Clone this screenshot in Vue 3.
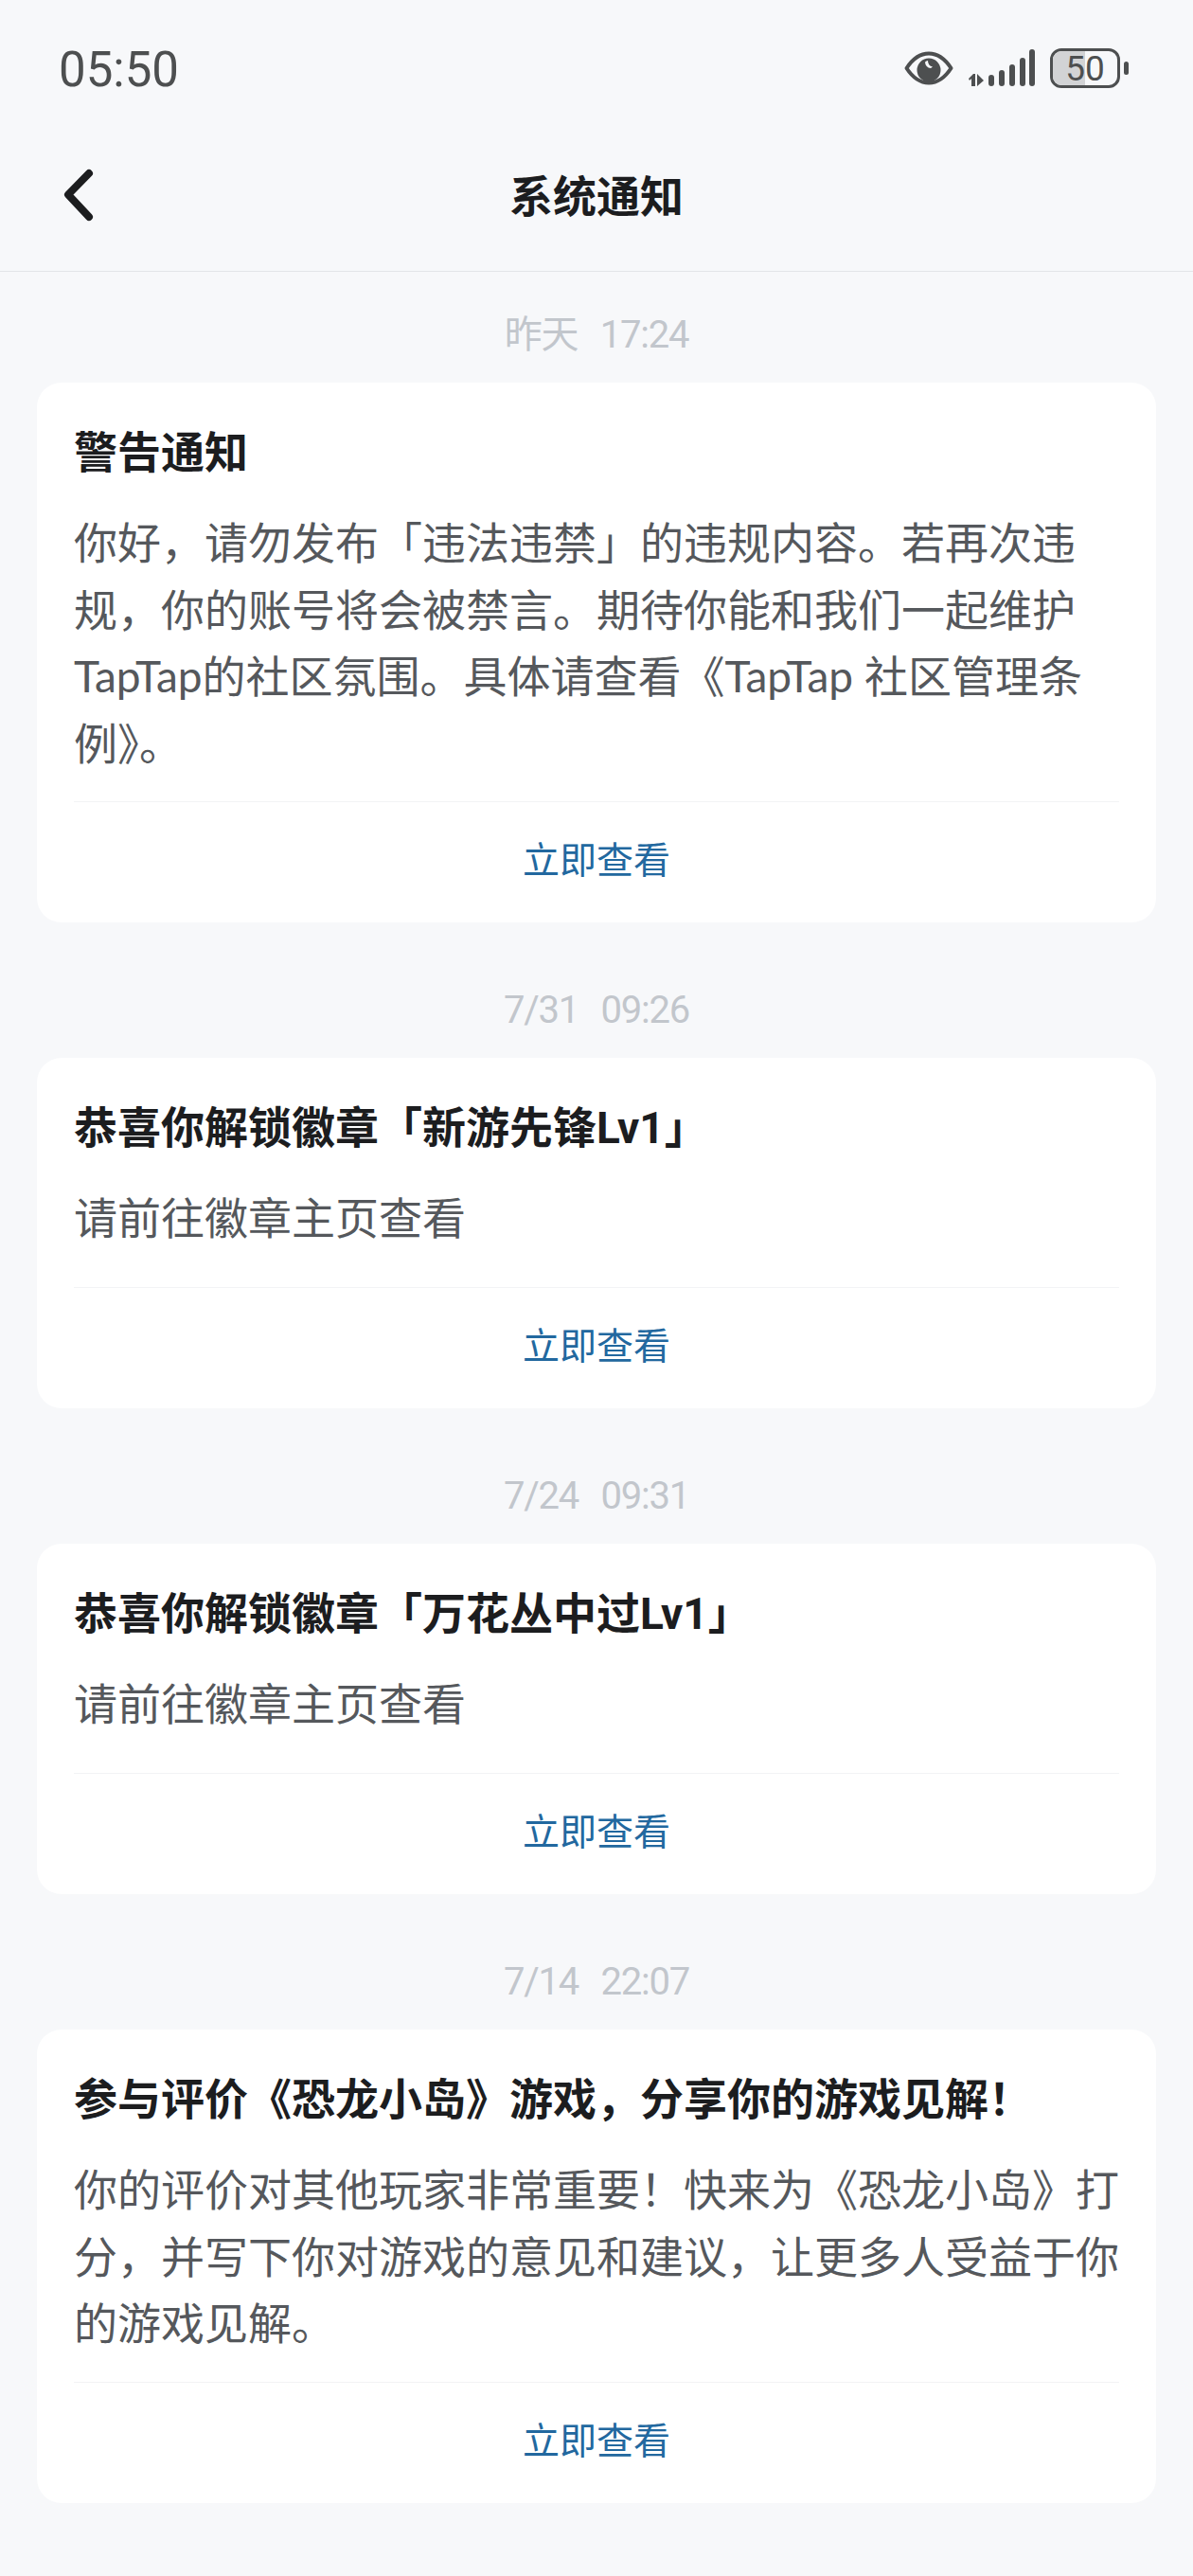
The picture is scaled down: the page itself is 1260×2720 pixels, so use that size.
<template>
  <div class="page">
    <div class="status-bar">
      <span class="clock">05:50</span>
      <div class="status-icons">
        <svg class="eye" viewBox="0 0 52 36" fill="none">
          <path d="M2.500 18C9 8 17 2.500 26 2.500S43 8 49.500 18C43 28 35 33.500 26 33.500S9 28 2.500 18z" stroke="#4d4f50" stroke-width="4" stroke-linejoin="round"/>
          <path fill-rule="evenodd" d="M26 7.500a12.500 12.500 0 1 1-12.500 12.500 12.500 12.500 0 0 1 12.500-12.500zm-1 2.500a5.500 5.500 0 0 0-3 1.500 6.500 6.500 0 0 0 6 6.500 5.500 5.500 0 0 0 2-1.500 6.500 6.500 0 0 1-5-6.500z" fill="#4d4f50"/>
        </svg>
        <svg class="signal" viewBox="0 0 70 40" fill="#4d4f50">
          <path d="M0 31l5-5h2v13H3v-8l-2 2zM9 26l7 7-7 6z"/>
          <rect x="21" y="27" width="6" height="12" rx="3"/>
          <rect x="32" y="22" width="6" height="17" rx="3"/>
          <rect x="43" y="16" width="6" height="23" rx="3"/>
          <rect x="54" y="9" width="6" height="30" rx="3"/>
          <rect x="64" y="0" width="6" height="39" rx="3"/>
        </svg>
        <div class="battery">
          <div class="battery-body">
            <div class="battery-level"></div>
            <span>50</span>
          </div>
          <div class="battery-cap"></div>
        </div>
      </div>
    </div>

    <header class="nav">
      <svg class="back" viewBox="0 0 32 56" fill="none">
        <path d="M27 5L5 27.500 27 51" stroke="#1c1d1f" stroke-width="8" stroke-linecap="round" stroke-linejoin="round"/>
      </svg>
      <h1>系统通知</h1>
    </header>

    <main class="list">
      <section v-for="item in notices" :key="item.time" class="notice">
        <div class="time">{{ item.time }}</div>
        <div class="card">
          <h2>{{ item.title }}</h2>
          <p>{{ item.body }}</p>
          <a class="action">立即查看</a>
        </div>
      </section>
    </main>
  </div>
</template>

<script setup>
const notices = [
  {
    time: '昨天  17:24',
    title: '警告通知',
    body: '你好，请勿发布「违法违禁」的违规内容。若再次违规，你的账号将会被禁言。期待你能和我们一起维护TapTap的社区氛围。具体请查看《TapTap 社区管理条例》。'
  },
  {
    time: '7/31  09:26',
    title: '恭喜你解锁徽章「新游先锋Lv1」',
    body: '请前往徽章主页查看'
  },
  {
    time: '7/24  09:31',
    title: '恭喜你解锁徽章「万花丛中过Lv1」',
    body: '请前往徽章主页查看'
  },
  {
    time: '7/14  22:07',
    title: '参与评价《恐龙小岛》游戏，分享你的游戏见解！',
    body: '你的评价对其他玩家非常重要！快来为《恐龙小岛》打分，并写下你对游戏的意见和建议，让更多人受益于你的游戏见解。'
  }
]
</script>

<style>
html, body {
  margin: 0;
  background: #f7f8fa;
}
</style>

<style scoped>
.page {
  width: 1260px;
  height: 2720px;
  overflow: hidden;
  background: #f7f8fa;
  font-family: Roboto, "Noto Sans CJK SC", sans-serif;
}

.status-bar {
  height: 144px;
  padding: 2px 68px 0 62px;
  box-sizing: border-box;
  display: flex;
  justify-content: space-between;
  align-items: center;
}

.clock {
  font-size: 51px;
  color: #4d4f50;
}

.status-icons {
  display: flex;
  align-items: center;
  margin-top: -2px;
}

.eye {
  width: 52px;
  height: 36px;
  margin-right: 16px;
}

.signal {
  width: 70px;
  height: 40px;
  margin-right: 16px;
}

.battery {
  display: flex;
  align-items: center;
  gap: 4px;
}

.battery-body {
  position: relative;
  width: 74px;
  height: 42px;
  box-sizing: border-box;
  border: 3px solid #4d4f50;
  border-radius: 12px;
  overflow: hidden;
  display: flex;
  align-items: center;
  justify-content: center;
}

.battery-level {
  position: absolute;
  left: 0;
  top: 0;
  bottom: 0;
  width: 50%;
  background: #d2d3d5;
}

.battery-body span {
  position: relative;
  font-size: 37px;
  line-height: 1;
  color: #4d4f50;
}

.battery-cap {
  width: 5px;
  height: 14px;
  border-radius: 3px;
  background: #4d4f50;
}

.nav {
  height: 143px;
  padding-bottom: 22px;
  box-sizing: border-box;
  position: relative;
  display: flex;
  align-items: center;
  justify-content: center;
  border-bottom: 1px solid #e3e5e8;
}

.nav h1 {
  margin: 0;
  font-size: 46px;
  font-weight: 700;
  color: #1c1d1f;
}

.back {
  position: absolute;
  left: 67px;
  top: 34px;
  width: 32px;
  height: 56px;
}

.list {
  padding: 17px 39px 0;
}

.time {
  height: 100px;
  text-align: center;
  font-size: 40px;
  letter-spacing: -1.200px;
  word-spacing: 3px;
  line-height: 100px;
  color: #c2c6cc;
  white-space: pre;
}

.notice + .notice {
  margin-top: 43px;
}

.card {
  background: #fff;
  border-radius: 26px;
  padding: 44px 39px 0;
}

.card h2 {
  margin: 0;
  font-size: 46px;
  line-height: 60px;
  font-weight: 700;
  color: #1c1d1f;
}

.card p {
  margin: 30px 0 0;
  min-height: 82px;
  font-family: Lato, "Noto Sans CJK SC", sans-serif;
  font-size: 46px;
  line-height: 70.500px;
  color: #55585c;
  padding-bottom: 26px;
}

.action {
  display: block;
  height: 127px;
  line-height: 124px;
  border-top: 1px solid #f2f3f5;
  text-align: center;
  font-size: 39px;
  color: #22689f;
}
</style>
